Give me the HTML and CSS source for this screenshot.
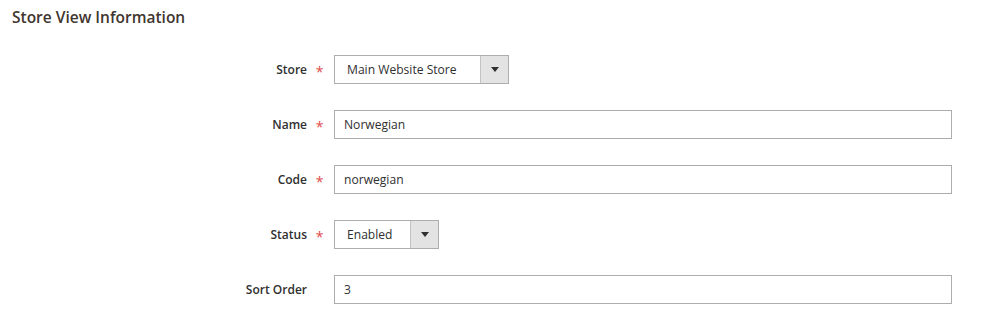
FILE: index.html
```html
<!DOCTYPE html>
<html lang="en">
<head>
  <meta charset="UTF-8">
  <title>Store View Information</title>
  <link rel="stylesheet" href="styles.css">
</head>
<body>

  <!-- Section title -->
  <h2 class="section-title">Store View Information</h2>

  <!-- Store view fields -->
  <form class="store-form">
    <div class="field">
      <label class="field-label">Store</label>
      <span class="field-mark">*</span>
      <div class="select select-store">
        <span class="select-value">Main Website Store</span>
        <span class="select-btn"><span class="arrow"></span></span>
      </div>
    </div>

    <div class="field">
      <label class="field-label">Name</label>
      <span class="field-mark">*</span>
      <div class="input">Norwegian</div>
    </div>

    <div class="field">
      <label class="field-label">Code</label>
      <span class="field-mark">*</span>
      <div class="input">norwegian</div>
    </div>

    <div class="field">
      <label class="field-label">Status</label>
      <span class="field-mark">*</span>
      <div class="select select-status">
        <span class="select-value">Enabled</span>
        <span class="select-btn"><span class="arrow"></span></span>
      </div>
    </div>

    <div class="field">
      <label class="field-label">Sort Order</label>
      <span class="field-mark"></span>
      <div class="input">3</div>
    </div>
  </form>

</body>
</html>
```

FILE: styles.css
```css
body {
  margin: 0;
  padding: 0 47px 0 12px;
  font-family: 'Open Sans', Arial, sans-serif;
  background-color: #fff;
  color: #303030;
}

.section-title {
  margin: 0;
  padding-top: 6px;
  font-size: 15.5px;
  line-height: 22px;
  font-weight: 600;
  color: #41362f;
}

.store-form {
  display: flex;
  flex-direction: column;
  gap: 26px;
  margin-top: 27px;
}

.field {
  display: flex;
  align-items: center;
  height: 29px;
}

.field-label {
  width: 295px;
  text-align: right;
  font-size: 12px;
  font-weight: 600;
  color: #303030;
}

.field-mark {
  width: 25px;
  padding-right: 2px;
  text-align: center;
  font-size: 14px;
  color: #de4b4b;
  padding-top: 3px;
}

.input, .select {
  box-sizing: border-box;
  height: 29px;
  border: 1px solid #adadad;
  font-size: 12.1px;
  display: flex;
  align-items: center;
  background: #fff;
}

.input {
  flex: 1;
  padding: 0 12px 0 9px;
}

.select-value {
  flex: 1;
  padding-left: 12px;
}

.select-store {
  width: 175px;
}

.select-status {
  width: 105px;
}

.select-btn {
  width: 27px;
  height: 100%;
  border-left: 1px solid #c2c2c2;
  background-color: #e3e3e3;
  display: flex;
  align-items: center;
  justify-content: center;
}

.arrow {
  width: 0;
  height: 0;
  border-left: 4px solid transparent;
  border-right: 4px solid transparent;
  border-top: 5px solid #303030;
}
```
